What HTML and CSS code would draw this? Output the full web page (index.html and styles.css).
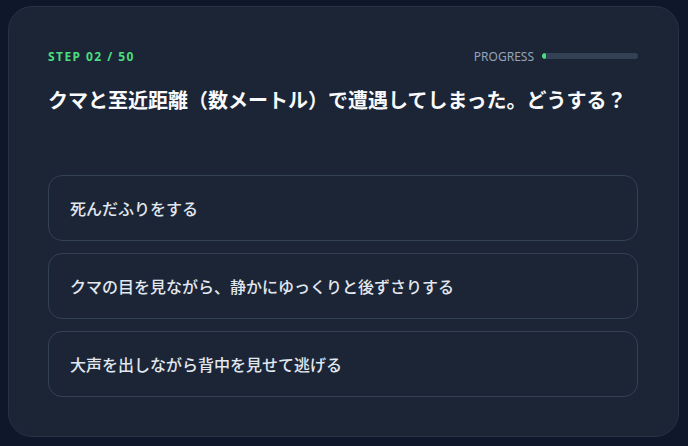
FILE: index.html
```html
<!DOCTYPE html>
<html lang="ja">
<head>
<meta charset="utf-8">
<title>Quiz</title>
<link rel="stylesheet" href="styles.css">
</head>
<body>
<main class="page">
  <section class="card">
    <header class="card-header">
      <span class="step">STEP 02 / 50</span>
      <div class="progress">
        <span class="progress-label">PROGRESS</span>
        <div class="progress-track"><div class="progress-fill" style="width: 4%"></div></div>
      </div>
    </header>
    <h1 class="question">クマと至近距離（数メートル）で遭遇してしまった。どうする？</h1>
    <div class="options">
      <button class="option">死んだふりをする</button>
      <button class="option">クマの目を見ながら、静かにゆっくりと後ずさりする</button>
      <button class="option">大声を出しながら背中を見せて逃げる</button>
    </div>
  </section>
</main>
</body>
</html>
```
FILE: styles.css
```css
* { box-sizing: border-box; }
html, body {
  margin: 0;
  padding: 0;
  background: #0f172a;
  font-family: "Noto Sans", "Noto Sans CJK JP", sans-serif;
}
.page {
  padding: 6px 9px 9px 8px;
}
.card {
  background: #1c2536;
  border: 1px solid #273246;
  border-radius: 24px;
  padding: 39px 40px 39px 39px;
}
.card-header {
  display: flex;
  justify-content: space-between;
  align-items: center;
  height: 20px;
  margin-bottom: 20px;
}
.step {
  color: #4ade80;
  font-size: 12px;
  font-weight: 700;
  letter-spacing: 0.12em;
}
.progress {
  display: flex;
  align-items: center;
  gap: 8px;
}
.progress-label {
  color: #94a3b8;
  font-size: 12px;
}
.progress-track {
  width: 96px;
  height: 6px;
  border-radius: 3px;
  background: #334155;
  overflow: hidden;
}
.progress-fill {
  height: 100%;
  background: #4ade80;
  border-radius: 3px;
}
.question {
  margin: 0 0 59px;
  color: #f8fafc;
  font-size: 20px;
  line-height: 30px;
  font-weight: 700;
}
.options {
  display: flex;
  flex-direction: column;
  gap: 12px;
}
.option {
  display: block;
  width: 100%;
  height: 66px;
  text-align: left;
  padding: 0 21px;
  background: #1c2536;
  border: 1px solid #334155;
  border-radius: 14px;
  color: #e2e8f0;
  font-family: inherit;
  font-size: 16px;
  font-weight: 500;
}
```
